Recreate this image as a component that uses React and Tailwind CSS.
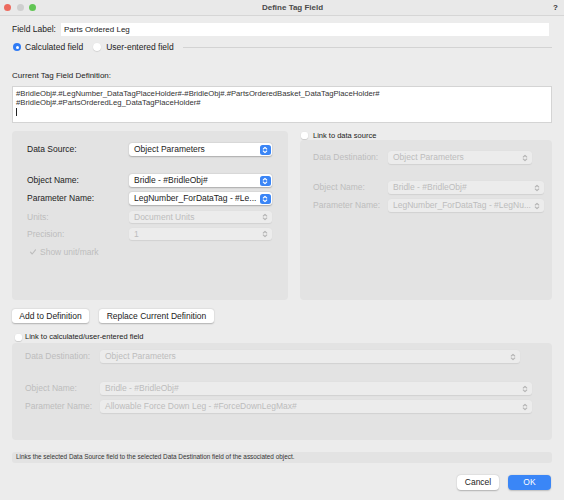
import React from 'react';

const FONT = { fontFamily: '"Liberation Sans", Arial, Helvetica, sans-serif' };

// Up/down chevron used in popup buttons
function Chevrons({ color }) {
  return (
    <svg width="8" height="10" viewBox="0 0 8 10" fill="none">
      <path d="M2.3 4 L4 2.3 L5.7 4 M2.3 6 L4 7.7 L5.7 6" stroke={color} strokeWidth="1.1" strokeLinecap="round" strokeLinejoin="round" />
    </svg>
  );
}

function Popup({ text, disabled, className = '' }) {
  if (disabled) {
    return (
      <div className={`flex items-center justify-between h-[12px] rounded-[3px] bg-[#ececec] shadow-[0_0.5px_1px_rgba(0,0,0,0.08)] pl-[5px] pr-[3px] ${className}`}>
        <span className="text-[8.5px] leading-none text-[#bcbcbc] whitespace-nowrap">{text}</span>
        <Chevrons color="#b5b5b5" />
      </div>
    );
  }
  return (
    <div className={`flex items-center justify-between h-[13px] rounded-[3px] bg-white shadow-[0_0.5px_1.5px_rgba(0,0,0,0.25)] pl-[5px] pr-[1.5px] ${className}`}>
      <span className="text-[8.5px] leading-none text-[#222] whitespace-nowrap">{text}</span>
      <div className="w-[11px] h-[10px] rounded-[2.5px] bg-[#3a85f6] flex items-center justify-center">
        <Chevrons color="#ffffff" />
      </div>
    </div>
  );
}

function Row({ label, labelW, disabled, children, className = '' }) {
  return (
    <div className={`flex items-center ${className}`}>
      <div className={`${labelW} text-[8.5px] leading-none whitespace-nowrap ${disabled ? 'text-[#bdbdbd]' : 'text-[#222]'}`}>{label}</div>
      {children}
    </div>
  );
}

function CheckBox() {
  return <div className="w-[7px] h-[7px] rounded-[2px] bg-white shadow-[0_0.5px_1px_rgba(0,0,0,0.25)]" />;
}

function Button({ children, className = '' }) {
  return (
    <div className={`h-[14px] flex items-center justify-center rounded-[3px] bg-white shadow-[0_0.5px_1.5px_rgba(0,0,0,0.25)] text-[8.5px] leading-none text-[#222] ${className}`}>
      {children}
    </div>
  );
}

export default function App() {
  return (
    <div style={FONT} className="w-[564px] h-[500px] bg-[#ececec] overflow-hidden">
      {/* Title bar */}
      <div className="h-[16px] flex items-center border-b border-[#d6d6d6] bg-[#e9e9e9] relative">
        <div className="flex items-center gap-[5.5px] ml-[4px]">
          <div className="w-[7px] h-[7px] rounded-full bg-[#ec6a5e]" />
          <div className="w-[7px] h-[7px] rounded-full bg-[#cfcfcf]" />
          <div className="w-[7px] h-[7px] rounded-full bg-[#61c554]" />
        </div>
        <div className="flex-1 text-center text-[8px] font-bold text-[#4a4a4a] leading-none pr-[4px]">Define Tag Field</div>
        <div className="text-[8px] font-bold text-[#333] leading-none mr-[6px]">?</div>
      </div>

      <div className="px-[12px]">
        {/* Field label */}
        <div className="mt-[7px] h-[13px] flex items-center">
          <div className="w-[49px] text-[8.5px] leading-none text-[#222]">Field Label:</div>
          <div className="flex-1 mr-[3px] h-[13px] bg-white flex items-center pl-[3px] text-[8px] text-[#222] leading-none">Parts Ordered Leg</div>
        </div>

        {/* Radios */}
        <div className="mt-[6px] h-[10px] flex items-center">
          <div className="ml-[1px] w-[8px] h-[8px] rounded-full bg-[#2f7bf5] flex items-center justify-center">
            <div className="w-[3px] h-[3px] rounded-full bg-white" />
          </div>
          <span className="ml-[4px] text-[8.5px] leading-none text-[#222]">Calculated field</span>
          <div className="ml-[10px] w-[8px] h-[8px] rounded-full bg-white shadow-[0_0.5px_1px_rgba(0,0,0,0.2)]" />
          <span className="ml-[5px] text-[8.5px] leading-none text-[#222]">User-entered field</span>
          <div className="flex-1 ml-[9px] h-px bg-[#d3d3d3]" />
        </div>

        {/* Definition */}
        <div className="mt-[19px] h-[10px] flex items-center text-[8px] leading-none text-[#222]">Current Tag Field Definition:</div>
        <div className="mt-[5px] h-[37px] bg-white border border-[#d4d4d4] pl-[3px] pt-[2px] text-[7.7px] leading-[9px] text-[#333]">
          <div>#BridleObj#.#LegNumber_DataTagPlaceHolder#-#BridleObj#.#PartsOrderedBasket_DataTagPlaceHolder#</div>
          <div>#BridleObj#.#PartsOrderedLeg_DataTagPlaceHolder#</div>
          <div className="w-px h-[8px] bg-[#222] mt-[1px]" />
        </div>

        {/* Source / destination panels */}
        <div className="mt-[8px] h-[169px] flex gap-[12px]">
          <div className="w-[276px] h-full rounded-[4px] bg-[#e3e3e3] pl-[15px] pt-[12px]">
            <Row label="Data Source:" labelW="w-[102px]">
              <Popup text="Object Parameters" className="w-[143px]" />
            </Row>
            <Row label="Object Name:" labelW="w-[102px]" className="mt-[18px]">
              <Popup text="Bridle - #BridleObj#" className="w-[143px]" />
            </Row>
            <Row label="Parameter Name:" labelW="w-[102px]" className="mt-[5px]">
              <Popup text="LegNumber_ForDataTag - #Le..." className="w-[143px]" />
            </Row>
            <Row label="Units:" labelW="w-[102px]" disabled className="mt-[6px]">
              <Popup text="Document Units" disabled className="w-[143px]" />
            </Row>
            <Row label="Precision:" labelW="w-[102px]" disabled className="mt-[5px]">
              <Popup text="1" disabled className="w-[143px]" />
            </Row>
            <div className="mt-[7px] h-[10px] flex items-center ml-[2px]">
              <svg width="8" height="8" viewBox="0 0 8 8" fill="none">
                <path d="M1.5 4.2 L3.2 6 L6.5 1.8" stroke="#bdbdbd" strokeWidth="1.1" strokeLinecap="round" strokeLinejoin="round" />
              </svg>
              <span className="ml-[3px] text-[8.5px] leading-none text-[#bdbdbd]">Show unit/mark</span>
            </div>
          </div>

          <div className="w-[252px] h-full flex flex-col">
            <div className="h-[9px] flex items-center">
              <div className="ml-[1px]"><CheckBox /></div>
              <span className="ml-[5px] text-[7.5px] leading-none text-[#222]">Link to data source</span>
            </div>
            <div className="flex-1 rounded-[4px] bg-[#e3e3e3] pl-[13px] pt-[11px]">
              <Row label="Data Destination:" labelW="w-[75px]" disabled>
                <Popup text="Object Parameters" disabled className="w-[144px] !h-[13px]" />
              </Row>
              <Row label="Object Name:" labelW="w-[75px]" disabled className="mt-[17px]">
                <Popup text="Bridle - #BridleObj#" disabled className="w-[156px] !h-[13px]" />
              </Row>
              <Row label="Parameter Name:" labelW="w-[75px]" disabled className="mt-[5px]">
                <Popup text="LegNumber_ForDataTag - #LegNu..." disabled className="w-[156px] !h-[13px]" />
              </Row>
            </div>
          </div>
        </div>

        {/* Action buttons */}
        <div className="mt-[9px] flex gap-[10px]">
          <Button className="w-[77px]">Add to Definition</Button>
          <Button className="w-[115px]">Replace Current Definition</Button>
        </div>

        {/* Link to calculated field */}
        <div className="mt-[9px] h-[10px] flex items-center">
          <div className="ml-[3px]"><CheckBox /></div>
          <span className="ml-[3px] text-[7.5px] leading-none text-[#222]">Link to calculated/user-entered field</span>
        </div>
        <div className="mt-[1px] h-[97px] rounded-[4px] bg-[#e3e3e3] pl-[13px] pt-[7px]">
          <Row label="Data Destination:" labelW="w-[75px]" disabled>
            <Popup text="Object Parameters" disabled className="w-[420px] !h-[13px]" />
          </Row>
          <Row label="Object Name:" labelW="w-[75px]" disabled className="mt-[19px]">
            <Popup text="Bridle - #BridleObj#" disabled className="w-[432px] !h-[13px]" />
          </Row>
          <Row label="Parameter Name:" labelW="w-[75px]" disabled className="mt-[5px]">
            <Popup text="Allowable Force Down Leg - #ForceDownLegMax#" disabled className="w-[432px] !h-[13px]" />
          </Row>
        </div>

        {/* Status */}
        <div className="mt-[12px] h-[11px] rounded-[3px] bg-[#e3e3e3] flex items-center pl-[4px] text-[6.4px] leading-none text-[#333]">
          Links the selected Data Source field to the selected Data Destination field of the associated object.
        </div>

        {/* Footer */}
        <div className="mt-[12px] flex justify-end gap-[9px] mr-[1px]">
          <div className="w-[42px] h-[15px] rounded-[4px] bg-white shadow-[0_0.5px_1.5px_rgba(0,0,0,0.25)] flex items-center justify-center text-[8.5px] leading-none text-[#222]">Cancel</div>
          <div className="w-[43px] h-[15px] rounded-[4px] bg-[#3a86f7] shadow-[0_0.5px_1.5px_rgba(0,0,0,0.2)] flex items-center justify-center text-[8.5px] leading-none text-white">OK</div>
        </div>
      </div>
    </div>
  );
}
